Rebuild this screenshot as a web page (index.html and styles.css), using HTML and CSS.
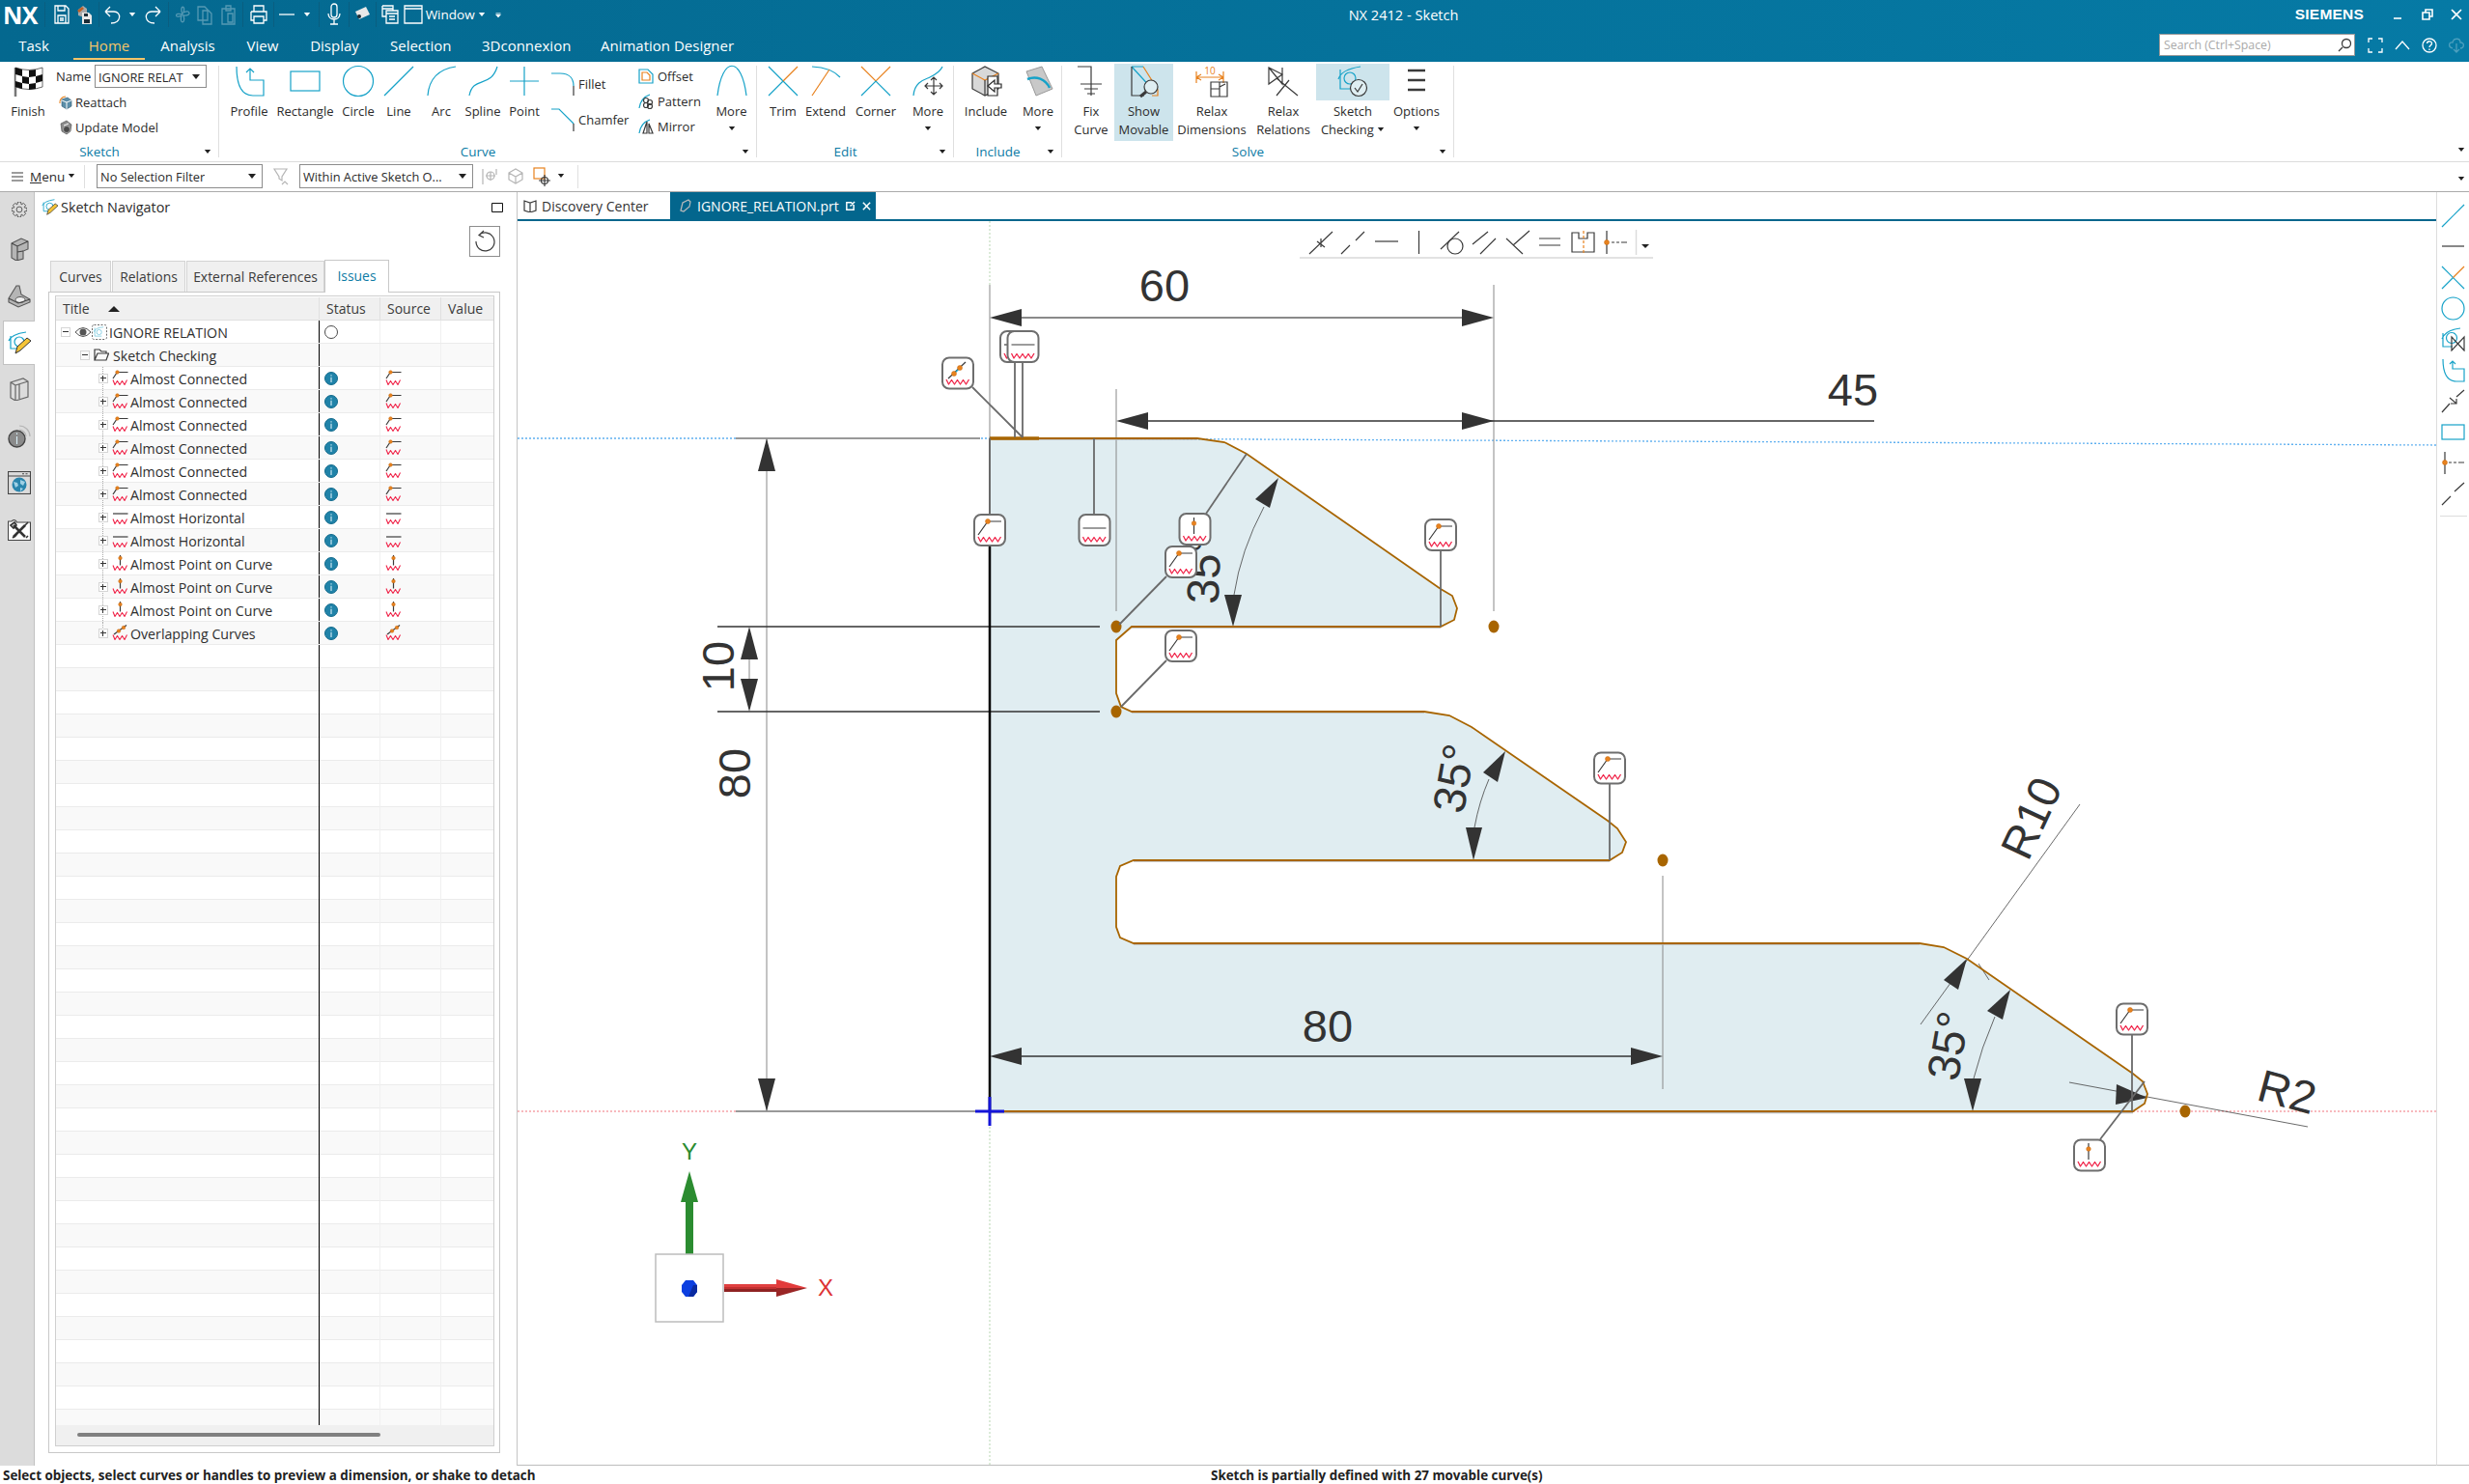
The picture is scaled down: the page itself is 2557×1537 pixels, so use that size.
FILE: index.html
```html
<!DOCTYPE html>
<html lang="en">
<head>
<meta charset="utf-8">
<title>NX 2412 - Sketch</title>
<link rel="stylesheet" href="styles.css">
</head>
<body>
<svg class="defs" width="0" height="0" aria-hidden="true">
  <defs>
    <symbol id="conn" viewBox="4 3 26 27"><path class="dk" d="M16 7H29M15 7L5 21"/><circle cx="15" cy="7" r="2.500" class="or"/><path class="sqw" d="M5 23l2.500 5 3-4.500 3 4.500 3-4.500 3 4.500 3-4.500 3 4.500 3-5"/></symbol>
    <symbol id="horiz" viewBox="4 3 26 27"><path class="dk" d="M5 14H29"/><path class="sqw" d="M5 23l2.500 5 3-4.500 3 4.500 3-4.500 3 4.500 3-4.500 3 4.500 3-5"/></symbol>
    <symbol id="poc" viewBox="4 3 26 27"><path class="dk" d="M16 4V21"/><circle cx="16" cy="10" r="2.300" class="or"/><path class="sqw" d="M5 23l2.500 5 3-4.500 3 4.500 3-4.500 3 4.500 3-4.500 3 4.500 3-5"/></symbol>
    <symbol id="over" viewBox="4 3 26 27"><path class="dk" d="M7 22L25 5"/><path class="cy" d="M13 17L19 11"/><circle cx="13" cy="17" r="2.500" class="or"/><circle cx="19" cy="11" r="2.500" class="or"/><path class="sqw" d="M5 23l2.500 5 3-4.500 3 4.500 3-4.500 3 4.500 3-4.500 3 4.500 3-5"/></symbol>
    <symbol id="rc" viewBox="0 0 17 17"><path class="dk" d="M6 2.500H16.500M5 3L1 9"/><circle cx="5.500" cy="2.500" r="1.800" class="or"/><path class="sqw2" d="M1 10.500l2 5 2.500-4 2.500 4 2.500-4 2.500 4 2.500-5"/></symbol>
    <symbol id="rh" viewBox="0 0 17 17"><path class="dk" d="M1 5H16.500"/><path class="sqw2" d="M1 10.500l2 5 2.500-4 2.500 4 2.500-4 2.500 4 2.500-5"/></symbol>
    <symbol id="rp" viewBox="0 0 17 17"><path class="dk" d="M8.500 0V10.500"/><circle cx="8.500" cy="3" r="1.800" class="or"/><path class="sqw2" d="M1 10.500l2 5 2.500-4 2.500 4 2.500-4 2.500 4 2.500-5"/></symbol>
    <symbol id="ro" viewBox="0 0 17 17"><path class="dk" d="M2 10L15 .5"/><circle cx="7" cy="6.500" r="1.800" class="or"/><circle cx="12" cy="3" r="1.800" class="or"/><path class="sqw2" d="M1 10.500l2 5 2.500-4 2.500 4 2.500-4 2.500 4 2.500-5"/></symbol>
    <symbol id="info" viewBox="0 0 14 14"><circle cx="7" cy="7" r="6.500" class="infoc"/><path class="infol" d="M7 3.200V4.500M7 5.800V11"/></symbol>
    <symbol id="sk" viewBox="0 0 32 32"><path class="bl" d="M3 4V27H22M1 15Q4 4 27 2"/><circle cx="15" cy="16" r="7" class="bl"/></symbol>
  </defs>
</svg>

<div class="app">
  <header class="top">
    <div class="bar1">
      <div class="quick">
        <span class="nx">NX</span><i class="qs"></i>
        <span class="qb w24"><svg viewBox="0 0 20 24"><path class="wh" d="M3 3H14L17 6V21H3ZM6 3V8H13V3M6 21V13H14V21M8 16H12M8 18H12"/></svg></span>
        <span class="qb w24"><svg viewBox="0 0 20 24"><path class="fg" d="M3 7L8 3 12 6V16L3 13Z"/><path class="fo" d="M2 8L7 4 9 6 4 10Z"/><path class="fw" d="M7 10H14L17 13V22H7Z"/><path class="fd" d="M9 11H13V14H9ZM9 17H15V21H9Z"/></svg></span>
        <i class="qs"></i>
        <span class="qb w24"><svg viewBox="0 0 20 24"><path class="wh" d="M3 9H12C20 9 20 21 9 21M3 9L8 4M3 9L8 14"/></svg></span>
        <span class="qb w18"><svg class="ddw" viewBox="0 0 10 6"><path d="M1 0H9L5 5Z"/></svg></span>
        <span class="qb w26"><svg viewBox="0 0 20 24"><path class="wh" d="M17 9H8C0 9 0 21 11 21M17 9L12 4M17 9L12 14"/></svg></span>
        <i class="qs"></i>
        <span class="qb w24 dimq"><svg viewBox="0 0 20 24"><path class="wh" d="M10 12C6 2 14 2 11 10C18 6 20 14 11 13C14 22 6 22 9 13C2 17 1 9 10 12Z"/></svg></span>
        <span class="qb w23 dimq"><svg viewBox="0 0 20 24"><path class="wh" d="M3 4H10L13 7V18H3ZM8 8H14L17 11V22H8V8Z"/></svg></span>
        <span class="qb w26 dimq"><svg viewBox="0 0 20 24"><path class="wh" d="M3 6H16V22H3ZM7 3H12V8H7ZM9 11H14V20H9Z"/></svg></span>
        <i class="qs"></i>
        <span class="qb w27"><svg viewBox="0 0 20 24"><path class="wh" d="M5 9V3H15V9M2 9H18V18H15M5 18H2V9M5 14H15V21H5Z"/></svg></span>
        <i class="qs"></i>
        <span class="qb w22"><svg viewBox="0 0 20 24"><path class="wh" d="M2 12H18"/></svg></span>
        <span class="qb w21"><svg class="ddw" viewBox="0 0 10 6"><path d="M1 0H9L5 5Z"/></svg></span>
        <i class="qs"></i>
        <span class="qb w26"><svg viewBox="0 0 20 24"><path class="wh" d="M7 4A3 3 0 0 1 13 4V12A3 3 0 0 1 7 12ZM4 11C4 19 16 19 16 11M10 17V22M6 22H14"/></svg></span>
        <i class="qs"></i>
        <span class="qb w24"><svg viewBox="0 0 20 24"><path class="fw" d="M3 9L14 4 18 12 7 17Z"/><circle cx="7" cy="14" r="2" class="fd"/></svg></span>
        <i class="qs"></i>
        <span class="qb w25"><svg viewBox="0 0 20 24"><path class="wh" d="M2 3H13V8M2 3V14H6M2 6H13M6 8H18V21H6ZM6 11H18M9 14H15M9 17H15"/></svg></span>
        <span class="qb w23"><svg viewBox="0 0 20 24"><path class="wh" d="M1 3H19V21H1ZM1 6H19"/></svg></span>
        <span class="win">Window</span>
        <span class="qb w17"><svg class="ddw" viewBox="0 0 10 6"><path d="M1 0H9L5 5Z"/></svg></span>
        <span class="qb w17"><svg class="ddw" viewBox="0 0 10 8"><path d="M1 3H9L5 8ZM1 .5H9" class="ddm"/></svg></span>
      </div>
      <div class="apptitle">NX 2412 - Sketch</div>
      <div class="winbtns">
        <span class="siemens">SIEMENS</span>
        <svg class="wb wb-min" viewBox="0 0 12 12"><path class="wh2" d="M3 10H11"/></svg>
        <svg class="wb wb-res" viewBox="0 0 12 12"><path class="wh2" d="M1 4H8V11H1ZM4 4V1H11V8H8"/></svg>
        <svg class="wb" viewBox="0 0 12 12"><path class="wh2" d="M1 1L11 11M11 1L1 11"/></svg>
      </div>
    </div>
    <nav class="bar2">
      <a class="tab t1">Task</a>
      <a class="tab t2 on">Home</a>
      <a class="tab t3">Analysis</a>
      <a class="tab t4">View</a>
      <a class="tab t5">Display</a>
      <a class="tab t6">Selection</a>
      <a class="tab t7">3Dconnexion</a>
      <a class="tab t8">Animation Designer</a>
      <div class="search">
        <span>Search (Ctrl+Space)</span>
        <svg viewBox="0 0 16 16"><path class="mag" d="M6 10L2 14"/><circle cx="10" cy="6" r="4.500" class="mag"/></svg>
      </div>
      <svg class="hb" viewBox="0 0 16 16"><path class="wh" d="M1 5V1H5M11 1H15V5M1 11V15H5M15 11V15H11"/></svg>
      <svg class="hb" viewBox="0 0 16 16"><path class="wh" d="M1 12L8 4 15 12"/></svg>
      <svg class="hb" viewBox="0 0 16 16"><circle cx="8" cy="8" r="7" class="wh"/><path class="wh" d="M5.500 6C6 2.500 11 3.500 10.500 6.300C10 8 8 8 8 10M8 11.500V13"/></svg>
      <svg class="hb dimb" viewBox="0 0 16 16"><path class="wh" d="M4 11C-1 10 0 4 4 5C5 0 12 0 12 5C17 5 16 11 12 11M8 6V15M5 12L8 15 11 12"/></svg>
    </nav>
  </header>

  <section class="ribbon">
    <div class="grp g-sketch">
      <div class="gbody">
        <button class="rb w58">
          <svg class="ri" viewBox="0 0 32 32"><path class="pole" d="M3 2V32"/><path class="flagw" d="M3 2Q17 7 31 2V22Q17 27 3 22Z"/><path class="flagb" d="M3 2L10 4V11L3 9ZM17 5L24 4V11L17 12ZM10 11L17 12V19L10 18ZM24 11L31 9V16L24 18ZM3 16L10 18V24L3 22ZM17 19L24 18V24L17 25Z"/></svg>
          <span>Finish</span>
        </button>
        <div class="skcol">
          <div class="namerow"><span class="nm">Name</span><div class="combo c-name"><span>IGNORE RELAT</span><svg class="dd" viewBox="0 0 10 6"><path d="M1 0H9L5 5Z"/></svg></div></div>
          <div class="sm s-re"><svg viewBox="0 0 16 16"><path class="c-o" d="M2 9A6 6 0 0 1 8 2"/><path class="f-b" d="M4 5L10 3 14 6V12L9 15 4 12Z"/><path class="c-w" d="M4 6L9 8 14 6M9 8V15"/></svg>Reattach</div>
          <div class="sm s-up"><svg viewBox="0 0 16 16"><path class="f-g" d="M3 4L9 1 14 5 13 12 9 15 4 12Z"/><circle cx="9" cy="10" r="3.500" class="f-d"/><path class="c-w" d="M6 6L11 4"/></svg>Update Model</div>
        </div>
      </div>
      <div class="gfoot"><b>Sketch</b><svg class="dd" viewBox="0 0 10 6"><path d="M1 0H9L5 5Z"/></svg></div>
    </div>
    <i class="rdiv"></i>
    <div class="grp g-curve">
      <div class="gbody pl7">
        <button class="rb w48"><svg class="ri" viewBox="0 0 32 32"><path class="bl" d="M3 1Q3 31 20 31H31V15H17V3M13 7L17 3 21 7"/></svg><span>Profile</span></button>
        <button class="rb w68"><svg class="ri" viewBox="0 0 32 32"><rect x="1" y="6" width="30" height="20" class="bl"/></svg><span>Rectangle</span></button>
        <button class="rb w42"><svg class="ri" viewBox="0 0 32 32"><ellipse cx="16" cy="16" rx="15.500" ry="15.500" class="bl"/></svg><span>Circle</span></button>
        <button class="rb w42"><svg class="ri" viewBox="0 0 32 32"><path class="bl" d="M1 31L31 1"/></svg><span>Line</span></button>
        <button class="rb w46"><svg class="ri" viewBox="0 0 32 32"><path class="bl" d="M2 31Q4 5 31 1"/></svg><span>Arc</span></button>
        <button class="rb w40"><svg class="ri" viewBox="0 0 32 32"><path class="bl" d="M2 31C6 10 24 24 31 1"/></svg><span>Spline</span></button>
        <button class="rb w46"><svg class="ri" viewBox="0 0 32 32"><path class="bl" d="M16 1V31M1 16H31"/></svg><span>Point</span></button>
        <div class="cf">
          <div class="cfr"><svg viewBox="0 0 24 24"><path class="bl" d="M0 1H9C20 1 23 8 23 14"/><path class="dk" d="M23 14V24"/></svg>Fillet</div>
          <div class="cfr cfr2"><svg viewBox="0 0 24 24"><path class="bl" d="M0 1H8L23 16"/><path class="dk" d="M23 16V24"/></svg>Chamfer</div>
        </div>
        <div class="ops">
          <div class="sm2"><svg viewBox="0 0 16 16"><path class="bl" d="M1 1H10L15 6V15H1Z"/><path class="c-o" d="M4 4H9L12 7V12H4Z"/></svg>Offset</div>
          <div class="sm2"><svg viewBox="0 0 16 16"><path class="bl" d="M1 15C2 8 6 3 12 1"/><circle cx="8" cy="7" r="2.500" class="dk"/><circle cx="12" cy="9" r="2.500" class="dk"/><circle cx="8" cy="12" r="2.500" class="dk"/><circle cx="12" cy="13" r="2.500" class="dk"/></svg>Pattern</div>
          <div class="sm2"><svg viewBox="0 0 16 16"><path class="bl" d="M1 15C2 8 6 3 12 1"/><path class="dk" d="M9 3V15H5ZM11 5V15H15Z"/></svg>Mirror</div>
        </div>
        <button class="rb w45"><svg class="ri" viewBox="0 0 32 32"><path class="bl" d="M1 31C6 -10 26 -10 31 31"/></svg><span>More</span><svg class="dd mdd" viewBox="0 0 10 6"><path d="M1 0H9L5 5Z"/></svg></button>
      </div>
      <div class="gfoot"><b>Curve</b><svg class="dd" viewBox="0 0 10 6"><path d="M1 0H9L5 5Z"/></svg></div>
    </div>
    <i class="rdiv"></i>
    <div class="grp g-edit">
      <div class="gbody pl6">
        <button class="rb w42"><svg class="ri" viewBox="0 0 32 32"><path class="bl" d="M1 1L31 31M1 31L16 16"/><path class="c-o" d="M16 16L31 1"/></svg><span>Trim</span></button>
        <button class="rb w46"><svg class="ri" viewBox="0 0 32 32"><path class="bl" d="M2 1Q22 2 31 12"/><path class="c-o" d="M2 31L20 4"/></svg><span>Extend</span></button>
        <button class="rb w58"><svg class="ri" viewBox="0 0 32 32"><path class="c-o" d="M1 1L16 16 31 1"/><path class="bl" d="M1 31L16 16 31 31"/></svg><span>Corner</span></button>
        <button class="rb w50"><svg class="ri" viewBox="0 0 32 32"><path class="bl" d="M1 31C2 16 14 14 18 12C24 9 29 6 31 1"/><path class="dk" d="M22 12V30M13 21H31M19 15L22 12 25 15M19 27L22 30 25 27M16 18L13 21 16 24M28 18L31 21 28 24"/></svg><span>More</span><svg class="dd mdd" viewBox="0 0 10 6"><path d="M1 0H9L5 5Z"/></svg></button>
      </div>
      <div class="gfoot"><b>Edit</b><svg class="dd" viewBox="0 0 10 6"><path d="M1 0H9L5 5Z"/></svg></div>
    </div>
    <i class="rdiv"></i>
    <div class="grp g-inc">
      <div class="gbody">
        <button class="rb w66"><svg class="ri" viewBox="0 0 32 32"><path class="f-g2" d="M2 8L15 1 29 8V24L15 31 2 24Z"/><path class="c-o" d="M2 8L15 15 29 8"/><path class="dk" d="M15 15V31"/><path class="f-wk" d="M18 11H28V31H18Z"/><path class="f-wk" d="M32 19H25V15L18 21 25 27V23H32Z"/></svg><span>Include</span></button>
        <button class="rb w42"><svg class="ri" viewBox="0 0 32 32"><path class="f-g3" d="M4 6L20 1 31 24 14 31Z"/><path class="bl2" d="M5 14C14 10 24 14 28 23"/></svg><span>More</span><svg class="dd mdd" viewBox="0 0 10 6"><path d="M1 0H9L5 5Z"/></svg></button>
      </div>
      <div class="gfoot"><b>Include</b><svg class="dd" viewBox="0 0 10 6"><path d="M1 0H9L5 5Z"/></svg></div>
    </div>
    <i class="rdiv"></i>
    <div class="grp g-solve">
      <div class="gbody pl6">
        <button class="rb w48"><svg class="ri" viewBox="0 0 32 32"><path class="dk" d="M2 1H16V19M5 19H27M9 24H23M12 29H20M16 19V31"/></svg><span>Fix<br>Curve</span></button>
        <button class="rb w61 hl"><svg class="ri" viewBox="0 0 32 32"><path class="c-o" d="M15 1L30 25V31H24"/><path class="bl" d="M3 1H15M3 1L25 25"/><path class="dk" d="M3 1V31H16"/><circle cx="23" cy="22" r="7" class="c-k"/><path class="dk2" d="M18 27L12 32"/></svg><span>Show<br>Movable</span></button>
        <button class="rb w80"><svg class="ri" viewBox="0 0 32 32"><path class="c-o" d="M0 6V18M28 6V18M0 12H28M0 12L5 9M0 12L5 15M28 12L23 9M28 12L23 15"/><text x="14" y="9" class="ten">10</text><path class="dk" d="M15 17H32V32H15ZM15 24H24V32M24 24V17M24 22L30 19"/></svg><span>Relax<br>Dimensions</span></button>
        <button class="rb w68"><svg class="ri" viewBox="0 0 32 32"><path class="dk" d="M1 2V19L15 9ZM1 2L15 19V2M9 13L31 31M9 31L22 15"/></svg><span>Relax<br>Relations</span></button>
        <button class="rb w76"><span class="hlbox"><svg class="ri" viewBox="0 0 32 32"><path class="bl" d="M3 4V24H14M1 14Q4 4 24 1"/><circle cx="13" cy="13" r="6" class="bl"/><circle cx="22" cy="23" r="8.500" class="c-k"/><path class="dk" d="M18 23L21 27 26 19"/></svg></span><span>Sketch<br>Checking <svg class="dd ddin" viewBox="0 0 10 6"><path d="M1 0H9L5 5Z"/></svg></span></button>
        <button class="rb w56"><svg class="ri" viewBox="0 0 32 32"><path class="dk3" d="M7 5H25M7 15H25M7 25H25"/></svg><span>Options</span><svg class="dd mdd" viewBox="0 0 10 6"><path d="M1 0H9L5 5Z"/></svg></button>
      </div>
      <div class="gfoot"><b>Solve</b><svg class="dd" viewBox="0 0 10 6"><path d="M1 0H9L5 5Z"/></svg></div>
    </div>
    <i class="rdiv"></i>
    <svg class="dd rcol" viewBox="0 0 10 6"><path d="M1 0H9L5 5Z"/></svg>
  </section>

  <section class="tools">
    <svg class="mn" viewBox="0 0 12 12"><path class="dk" d="M0 2H12M0 6H12M0 10H12"/></svg>
    <span class="menu"><u>M</u>enu</span>
    <svg class="dd m1" viewBox="0 0 10 6"><path d="M1 0H9L5 5Z"/></svg>
    <i class="tdiv"></i>
    <div class="combo c-f1"><span>No Selection Filter</span><svg class="dd" viewBox="0 0 10 6"><path d="M1 0H9L5 5Z"/></svg></div>
    <svg class="ti ti1" viewBox="0 0 20 20"><path class="gr" d="M3 2H16L11 10V14L8 12V10ZM11 18L14 15 17 18"/></svg>
    <div class="combo c-f2"><span>Within Active Sketch O...</span><svg class="dd" viewBox="0 0 10 6"><path d="M1 0H9L5 5Z"/></svg></div>
    <svg class="ti ti2" viewBox="0 0 20 20"><path class="gr" d="M3 2V18M17 2V8M6 9H16M11 5V14"/><circle cx="11" cy="9" r="4" class="gr"/></svg>
    <svg class="ti ti3" viewBox="0 0 20 20"><path class="gr" d="M3 6L10 2 17 6V13L10 17 3 13ZM3 6L10 10 17 6M10 10V17"/></svg>
    <svg class="ti ti4" viewBox="0 0 20 20"><rect x="2" y="1" width="11" height="11" class="c-o"/><path class="dk" d="M13 8V20M7 14H19"/><circle cx="13" cy="14" r="3.500" class="dk"/></svg>
    <svg class="dd m2" viewBox="0 0 10 6"><path d="M1 0H9L5 5Z"/></svg>
    <i class="tdiv d2"></i>
    <svg class="dd rcol" viewBox="0 0 10 6"><path d="M1 0H9L5 5Z"/></svg>
  </section>

  <main class="work">
    <aside class="rail">
      <div class="rit h35"><svg class="gear" viewBox="3 3 22 22"><circle cx="14" cy="14" r="4" class="rg"/><path class="rg" d="M12 3H16L17 7 20 5 23 8 21 11 25 12V16L21 17 23 20 20 23 17 21 16 25H12L11 21 8 23 5 20 7 17 3 16V12L7 11 5 8 8 5 11 7Z"/></svg></div>
      <div class="rit h48"><svg viewBox="0 0 24 24"><path class="rf" d="M4 6L14 1 21 4V12L16 14V22L9 24 4 21Z"/><path class="rl" d="M4 6L10 9 21 4M10 9V24M10 15L16 14"/></svg></div>
      <div class="rit h50"><svg viewBox="0 0 24 24"><path class="rf" d="M1 14L9 1H12L14 10 23 15V18L11 23 1 18Z"/><ellipse cx="13" cy="15.500" rx="5" ry="3" class="rw"/><path class="rl" d="M1 14L11 19 23 15"/></svg></div>
      <div class="rit h46 act"><svg viewBox="0 0 24 24"><path class="bl" d="M3 5V18H13M1 10Q4 3 19 1"/><circle cx="12" cy="11" r="5" class="bl"/><path class="pen" d="M8 23L10 16 20 7 24 10 13 20Z"/></svg></div>
      <div class="rit h50"><svg viewBox="0 0 24 24"><path class="rl2" d="M3 5L16 1 21 4V20L8 24 3 21ZM8 8L21 4M8 8V24M3 5L8 8M12 7V22"/></svg></div>
      <div class="rit h48"><svg viewBox="0 0 24 24"><circle cx="9.500" cy="14.500" r="8.500" class="ri-i"/><path class="infol" d="M9.500 12V20M9.500 8.500V10"/><path class="rarc" d="M12 1C18 1 23 6 23 12M12 5C15 5 19 8 19 12"/></svg></div>
      <div class="rit h48"><svg viewBox="0 0 24 24"><rect x=".5" y=".5" width="23" height="23" class="rl"/><path class="rl" d="M.5 5H23.500M15 2.800H17M18.500 2.800H20.500"/><circle cx="12" cy="14" r="7.500" class="glob"/><path class="globl" d="M6 11L10 12 11 15 8 17ZM13 9L18 11 16 15 13 13ZM13 17L16 18 13 21Z"/></svg></div>
      <div class="rit h48"><svg viewBox="0 0 24 24"><path class="rw2" d="M.5 4H4A3 3 0 0 1 9 4V5H23.500V23.500H.5Z"/><path class="tool" d="M6 8L18 20M18 8L6 20"/><path class="tool2" d="M3 8L7 5 9 8 6 11ZM16 10L21 5M5 21L9 18M19 21L21 19"/></svg></div>
    </aside>

    <aside class="nav">
      <div class="navhead">
        <svg class="nvi" viewBox="0 0 24 24"><path class="bl" d="M3 5V18H13M1 10Q4 3 19 1"/><circle cx="12" cy="11" r="5" class="bl"/><path class="pen" d="M8 23L10 16 20 7 24 10 13 20Z"/></svg>
        <span class="navt">Sketch Navigator</span>
        <svg class="maxi" viewBox="0 0 12 11"><path d="M.5 1.500H11.500V10.500H.5Z" class="mx"/></svg>
      </div>
      <button class="reset"><svg viewBox="0 0 24 24"><path class="dk" d="M6 5.500A9.500 9.500 0 1 1 3 12M11 1L6 5.500 11 8"/></svg></button>
      <div class="ntabs">
        <span class="nt nt1">Curves</span>
        <span class="nt nt2">Relations</span>
        <span class="nt nt3">External References</span>
        <span class="nt nt4">Issues</span>
      </div>
      <div class="box">
        <div class="inner">
          <div class="hdr">
            <div class="hc">Title<svg class="sort" viewBox="0 0 12 6"><path d="M6 0L12 6H0Z"/></svg></div>
            <div class="hc">Status</div>
            <div class="hc">Source</div>
            <div class="hc">Value</div>
          </div>
          <div class="row">
            <div class="c1 lv0"><i class="exp"></i><svg class="eye" viewBox="0 0 16 12"><path class="eyeo" d="M0 6Q8 -3 16 6Q8 15 0 6Z"/><circle cx="8" cy="6" r="3.500" class="eyep"/></svg><svg class="rootk" viewBox="0 0 16 16"><rect x=".5" y=".5" width="15" height="15" rx="2" class="dash"/><use href="#sk" x="2" y="2" width="12" height="12"/></svg><span class="rt">IGNORE RELATION</span></div>
            <div class="cs"><svg class="st" viewBox="0 0 14 14"><circle cx="7" cy="7" r="6.500" class="emp"/></svg></div><div class="cx"></div><div class="cv"></div>
          </div>
          <div class="row alt">
            <div class="c1 lv1"><i class="exp"></i><svg class="fold" viewBox="0 0 16 13"><path class="dk" d="M1 12V1H6L8 3H13V5H4L1 12H13L15.500 5H13"/></svg><span class="st2">Sketch Checking</span></div>
            <div class="cs"></div><div class="cx"></div><div class="cv"></div>
          </div>
          <div class="row ch"><div class="c1 lv2"><i class="exp pl"></i><svg class="ik"><use href="#rc"/></svg><span>Almost Connected</span></div><div class="cs"><svg class="st"><use href="#info"/></svg></div><div class="cx"><svg class="ik"><use href="#rc"/></svg></div><div class="cv"></div></div>
          <div class="row alt ch"><div class="c1 lv2"><i class="exp pl"></i><svg class="ik"><use href="#rc"/></svg><span>Almost Connected</span></div><div class="cs"><svg class="st"><use href="#info"/></svg></div><div class="cx"><svg class="ik"><use href="#rc"/></svg></div><div class="cv"></div></div>
          <div class="row ch"><div class="c1 lv2"><i class="exp pl"></i><svg class="ik"><use href="#rc"/></svg><span>Almost Connected</span></div><div class="cs"><svg class="st"><use href="#info"/></svg></div><div class="cx"><svg class="ik"><use href="#rc"/></svg></div><div class="cv"></div></div>
          <div class="row alt ch"><div class="c1 lv2"><i class="exp pl"></i><svg class="ik"><use href="#rc"/></svg><span>Almost Connected</span></div><div class="cs"><svg class="st"><use href="#info"/></svg></div><div class="cx"><svg class="ik"><use href="#rc"/></svg></div><div class="cv"></div></div>
          <div class="row ch"><div class="c1 lv2"><i class="exp pl"></i><svg class="ik"><use href="#rc"/></svg><span>Almost Connected</span></div><div class="cs"><svg class="st"><use href="#info"/></svg></div><div class="cx"><svg class="ik"><use href="#rc"/></svg></div><div class="cv"></div></div>
          <div class="row alt ch"><div class="c1 lv2"><i class="exp pl"></i><svg class="ik"><use href="#rc"/></svg><span>Almost Connected</span></div><div class="cs"><svg class="st"><use href="#info"/></svg></div><div class="cx"><svg class="ik"><use href="#rc"/></svg></div><div class="cv"></div></div>
          <div class="row ch"><div class="c1 lv2"><i class="exp pl"></i><svg class="ik"><use href="#rh"/></svg><span>Almost Horizontal</span></div><div class="cs"><svg class="st"><use href="#info"/></svg></div><div class="cx"><svg class="ik"><use href="#rh"/></svg></div><div class="cv"></div></div>
          <div class="row alt ch"><div class="c1 lv2"><i class="exp pl"></i><svg class="ik"><use href="#rh"/></svg><span>Almost Horizontal</span></div><div class="cs"><svg class="st"><use href="#info"/></svg></div><div class="cx"><svg class="ik"><use href="#rh"/></svg></div><div class="cv"></div></div>
          <div class="row ch"><div class="c1 lv2"><i class="exp pl"></i><svg class="ik"><use href="#rp"/></svg><span>Almost Point on Curve</span></div><div class="cs"><svg class="st"><use href="#info"/></svg></div><div class="cx"><svg class="ik"><use href="#rp"/></svg></div><div class="cv"></div></div>
          <div class="row alt ch"><div class="c1 lv2"><i class="exp pl"></i><svg class="ik"><use href="#rp"/></svg><span>Almost Point on Curve</span></div><div class="cs"><svg class="st"><use href="#info"/></svg></div><div class="cx"><svg class="ik"><use href="#rp"/></svg></div><div class="cv"></div></div>
          <div class="row ch"><div class="c1 lv2"><i class="exp pl"></i><svg class="ik"><use href="#rp"/></svg><span>Almost Point on Curve</span></div><div class="cs"><svg class="st"><use href="#info"/></svg></div><div class="cx"><svg class="ik"><use href="#rp"/></svg></div><div class="cv"></div></div>
          <div class="row alt ch last"><div class="c1 lv2"><i class="exp pl"></i><svg class="ik"><use href="#ro"/></svg><span>Overlapping Curves</span></div><div class="cs"><svg class="st"><use href="#info"/></svg></div><div class="cx"><svg class="ik"><use href="#ro"/></svg></div><div class="cv"></div></div>
          <div class="filler"></div>
          <div class="hscroll"><i></i></div>
        </div>
      </div>
    </aside>

    <section class="doc">
      <div class="doctabs">
        <span class="dt dt1"><svg viewBox="0 0 14 14"><path class="dk" d="M1 2L7 4 13 2V12L7 14 1 12ZM7 4V14"/></svg>Discovery Center</span>
        <span class="dt dt2"><svg viewBox="0 0 14 14"><path class="gray" d="M2 12L4 4 10 1 12 3 11 8 5 13Z"/></svg>IGNORE_RELATION.prt<svg class="dtx" viewBox="0 0 12 12"><path class="wh2" d="M2 2H7L10 5V10H2ZM6 6L11 1"/></svg><svg class="dtx" viewBox="0 0 12 12"><path class="wh2" d="M2 2L10 10M10 2L2 10"/></svg></span>
      </div>
      <div class="canvas">
        <svg class="sketch" viewBox="536 229 1987 1288">
          <path class="shape" d="M1025 454H1240L1268 458 1291 470 1492 610 1504 617 1509 630 1506 642 1492 649H1172L1156 663V718L1161 732 1172 737H1475L1501 741 1524 753 1665 850 1675 858 1684 872 1680 883 1667 891H1174L1160 897 1156 908V960L1160 971 1174 977H1988L2013 981 2037 993 2209 1112 2219 1120 2224 1133 2221 1143 2209 1151H1025Z"/>
          <path class="d-green" d="M1025 229V295M1025 1151V1517"/>
          <path class="d-blue" d="M536 454H1025M1025 454L1300 455 2523 461"/>
          <path class="d-red" d="M536 1151H762M2209 1151H2523"/>

          <g class="ext">
            <path d="M1025 295V454"/>
            <path d="M1547 295V633"/>
            <path d="M1156 403V633"/>
            <path d="M1722 907V1128"/>
            <path d="M794 454V1151"/>
            <path d="M776 683V703"/>
          </g>
          <g class="ext2">
            <path d="M762 454H1015"/>
            <path d="M762 1151H1025"/>
          </g>
          <path class="dimg" d="M1058 329H1514"/>
          <g class="dimk">
            <path d="M1189 436H1941"/>
            <path d="M743 649H1139M743 737H1139"/>
            <path d="M1058 1094H1689"/>
          </g>
          <g class="thin">
            <path d="M1309 525Q1285 570 1278 616"/>
            <path d="M1542 807Q1532 830 1527 857"/>
            <path d="M2066 1053Q2052 1085 2044 1117"/>
            <path d="M2154 833L1989 1061"/>
            <path d="M2049 998L2060 1015"/>
            <path d="M2143 1121L2390 1167"/>
          </g>
          <g class="arrow">
            <polygon points="1025,329 1058,320 1058,338"/>
            <polygon points="1547,329 1514,320 1514,338"/>
            <polygon points="1156,436 1189,427 1189,445"/>
            <polygon points="1547,436 1514,427 1514,445"/>
            <polygon points="794,454 785,488 803,488"/>
            <polygon points="794,1151 785,1117 803,1117"/>
            <polygon points="776,649 767,683 785,683"/>
            <polygon points="776,737 767,703 785,703"/>
            <polygon points="1025,1094 1058,1085 1058,1103"/>
            <polygon points="1722,1094 1689,1085 1689,1103"/>
            <polygon points="1324,495 1300,517 1315,526"/>
            <polygon points="1277,649 1268,616 1286,616"/>
            <polygon points="1559,778 1536,800 1551,810"/>
            <polygon points="1526,891 1518,857 1535,857"/>
            <polygon points="2082,1025 2058,1047 2074,1056"/>
            <polygon points="2043,1151 2034,1117 2052,1117"/>
            <polygon points="2037,993 2013,1015 2028,1025"/>
            <polygon points="2224,1137 2192,1123 2191,1144"/>
          </g>

          <text class="dt-t" x="1206" y="312">60</text>
          <text class="dt-t" x="1919" y="420">45</text>
          <text class="dt-t" x="1375" y="1079">80</text>
          <text class="dt-t" transform="translate(760 801) rotate(-90)" y="17">80</text>
          <text class="dt-t" transform="translate(743 690) rotate(-90)" y="17">10</text>
          <text class="dt-t" transform="translate(1246 590) rotate(-88)" y="17">35°</text>
          <text class="dt-t" transform="translate(1505 806) rotate(-80)" y="17">35°</text>
          <text class="dt-t" transform="translate(2017 1083) rotate(-80)" y="17">35°</text>
          <text class="dt-t" transform="translate(2103 847) rotate(-65)" y="17">R10</text>
          <text class="dt-t" transform="translate(2369 1130) rotate(15)" y="17">R2</text>

          <path class="under" d="M1025 455H1240M1172 650H1492M1172 738H1475M1174 892H1667M1174 978H1988M1025 1152.500H2209"/>
          <path class="outline" d="M1025 454H1240L1268 458 1291 470 1492 610 1504 617 1509 630 1506 642 1492 649H1172L1156 663V718L1161 732 1172 737H1475L1501 741 1524 753 1665 850 1675 858 1684 872 1680 883 1667 891H1174L1160 897 1156 908V960L1160 971 1174 977H1988L2013 981 2037 993 2209 1112 2219 1120 2224 1133 2221 1143 2209 1151H1025"/>
          <path class="thick" d="M1025 454H1076"/>
          <path class="axis" d="M1025 565V1151"/>
          <path class="axisg" d="M1025 454V533"/>
          <path class="origin" d="M1010 1151H1040M1025 1136V1166"/>

          <g class="pts">
            <ellipse cx="1156" cy="649" rx="5.500" ry="6.500"/>
            <ellipse cx="1156" cy="737" rx="5.500" ry="6.500"/>
            <ellipse cx="1547" cy="649" rx="5.500" ry="6.500"/>
            <ellipse cx="1722" cy="891" rx="5.500" ry="6.500"/>
            <ellipse cx="2263" cy="1151" rx="5.500" ry="6.500"/>
          </g>

          <g class="lead">
            <path d="M1007 401L1059 453"/>
            <path d="M1051 375V453M1059 375V453"/>
            <path d="M1133 454V533"/>
            <path d="M1249 532L1291 470"/>
            <path d="M1208 597L1159 647"/>
            <path d="M1208 684L1161 732"/>
            <path d="M1492 570V649"/>
            <path d="M1667 812V891"/>
            <path d="M2208 1072V1151"/>
            <path d="M2175 1180L2221 1120"/>
          </g>

          <g class="call"><rect x="1036" y="343" width="32" height="32" rx="7"/><use href="#horiz" x="1039" y="346" width="26" height="27"/></g>
          <g class="call"><rect x="1043.500" y="343" width="32" height="32" rx="7"/><use href="#horiz" x="1046.500" y="346" width="26" height="27"/></g>
          <g class="call"><rect x="976" y="370.500" width="32" height="32" rx="7"/><use href="#over" x="979" y="373" width="26" height="27"/></g>
          <g class="call"><rect x="1009" y="533" width="32" height="32" rx="7"/><use href="#conn" x="1012" y="536" width="26" height="27"/></g>
          <g class="call"><rect x="1117.500" y="533" width="32" height="32" rx="7"/><use href="#horiz" x="1120.500" y="536" width="26" height="27"/></g>
          <g class="call"><rect x="1221.500" y="532" width="32" height="32" rx="7"/><use href="#poc" x="1224.500" y="535" width="26" height="27"/></g>
          <g class="call"><rect x="1207" y="566" width="32" height="32" rx="7"/><use href="#conn" x="1210" y="569" width="26" height="27"/></g>
          <g class="call"><rect x="1207" y="653" width="32" height="32" rx="7"/><use href="#conn" x="1210" y="656" width="26" height="27"/></g>
          <g class="call"><rect x="1476" y="538" width="32" height="32" rx="7"/><use href="#conn" x="1479" y="541" width="26" height="27"/></g>
          <g class="call"><rect x="1651" y="779.500" width="32" height="32" rx="7"/><use href="#conn" x="1654" y="782" width="26" height="27"/></g>
          <g class="call"><rect x="2192" y="1039.500" width="32" height="32" rx="7"/><use href="#conn" x="2195" y="1042" width="26" height="27"/></g>
          <g class="call"><rect x="2148" y="1180.500" width="32" height="32" rx="7"/><use href="#poc" x="2151" y="1183" width="26" height="27"/></g>

          <path class="ygreen" d="M714 1299V1245"/>
          <polygon class="yhead" points="714,1213 705,1245 723,1245"/>
          <rect class="tbox" x="679" y="1299" width="70" height="70"/>
          <polygon class="oct" points="710,1326 718,1326 722,1331 722,1338 718,1343 710,1343 706,1338 706,1331"/>
          <polygon class="octd" points="718,1331 722,1331 722,1338 718,1343 713,1343"/>
          <rect class="xsh1" x="750" y="1330" width="55" height="3"/>
          <rect class="xsh2" x="750" y="1333" width="55" height="2"/>
          <rect class="xsh3" x="750" y="1335" width="55" height="3"/>
          <polygon class="xh1" points="804,1325 836,1334 804,1334"/>
          <polygon class="xh2" points="804,1334 836,1334 804,1343"/>
          <text class="tl-y" x="714" y="1201">Y</text>
          <text class="tl-x" x="855" y="1342">X</text>
        </svg>
        <div class="ctool">
          <svg viewBox="1346 236 366 31">
            <path class="dk" d="M1356 263L1380 240M1364 250L1372 256M1368 247V256"/>
            <path class="dk" d="M1389 263L1398 254M1404 249L1413 240"/>
            <path class="dk" d="M1424 250H1448"/>
            <path class="dk" d="M1469.500 239V263"/>
            <path class="dk" d="M1492 258L1511 240"/><circle cx="1507" cy="255" r="8" class="dk"/>
            <path class="dk" d="M1525 253L1541 240M1533 263L1549 247"/>
            <path class="dk" d="M1560 247L1577 263M1567 254L1584 239"/>
            <path class="dk" d="M1594 247H1616M1594 254H1616"/>
            <path class="dk" d="M1628 241H1635V247H1644V241H1651V261H1628Z"/>
            <path class="dso" d="M1640 239V264"/>
            <path class="dk" d="M1664 239V263M1669 251H1672M1674 251H1677M1679 251H1685"/>
            <circle cx="1664" cy="251" r="2.500" class="or"/>
            <path class="ctdiv" d="M1694.500 238V264"/>
            <path class="ctdd" d="M1700 253H1708L1704 257Z"/>
          </svg>
        </div>
      </div>
    </section>

    <aside class="rtool">
      <svg viewBox="0 0 25 25"><path class="bl" d="M1 24L24 1"/></svg>
      <svg viewBox="0 0 25 25"><path class="dk" d="M1 12H24"/></svg>
      <svg viewBox="0 0 25 25"><path class="bl" d="M1 1L24 24M1 24L12.500 12.500"/><path class="c-o" d="M12.500 12.500L24 1"/></svg>
      <svg viewBox="0 0 25 25"><circle cx="12.500" cy="12.500" r="11.500" class="bl"/></svg>
      <svg viewBox="0 0 25 25"><path class="bl" d="M2 6V20H12M1 12Q4 3 20 1"/><circle cx="11" cy="11" r="5.500" class="bl"/><path class="dk" d="M11 10V24L24 10V24ZM11 10L24 24"/></svg>
      <svg viewBox="0 0 25 25"><path class="bl" d="M2 1Q2 24 16 24H24V11H12V3M9 6L12 3 15 6"/></svg>
      <svg viewBox="0 0 25 25"><path class="dk" d="M1 24L9 15M16 8L24 1M9 9L16 15M16 10V15H10"/></svg>
      <svg viewBox="0 0 25 25"><rect x="1" y="5" width="23" height="15" class="bl"/></svg>
      <svg viewBox="0 0 25 25"><path class="dk" d="M4 1V24M8 12H11M13 12H16M18 12H24"/><circle cx="4" cy="12" r="2.500" class="or"/></svg>
      <svg viewBox="0 0 25 25"><path class="dk" d="M1 24L10 15M14 10L24 1"/></svg>
      <i class="rtdiv"></i>
    </aside>
  </main>

  <footer class="status">
    <span class="s1">Select objects, select curves or handles to preview a dimension, or shake to detach</span>
    <span class="s2">Sketch is partially defined with 27 movable curve(s)</span>
  </footer>
</div>
</body>
</html>
```

FILE: styles.css
```css
* { box-sizing: border-box; }
html, body { margin: 0; height: 100%; overflow: hidden; background: #fff; }
body { font-family: "Open Sans", "Noto Sans", "Liberation Sans", sans-serif; font-size: 13px; color: #2b2b2b; }
.defs { position: absolute; }
.app { width: 2557px; height: 1537px; display: flex; flex-direction: column; }
i { display: block; font-style: normal; }
button { font: inherit; color: inherit; background: none; border: 0; padding: 0; }

/* shared stroke styles */
svg path, svg circle, svg rect, svg ellipse { fill: none; }
.dk { stroke: #3a3a3a; stroke-width: 1.200; }
.dk2 { stroke: #3a3a3a; stroke-width: 3; }
.dk3 { stroke: #3a3a3a; stroke-width: 2.500; }
.bl { stroke: #16a2c8; stroke-width: 1.200; }
.bl2 { stroke: #16a2c8; stroke-width: 2.500; }
.c-o { stroke: #e8821e; stroke-width: 1.200; }
.c-k { stroke: #3a3a3a; stroke-width: 1.200; fill: #dfeef2 !important; }
.c-w { stroke: #fff; stroke-width: 1; }
svg .or { fill: #e8821e; stroke: #c9690f; stroke-width: .5; }
.cy { stroke: #16a2c8; stroke-width: 1.500; }
.sqw { stroke: #f0254a; stroke-width: 1.300; stroke-linejoin: round; }
.sqw2 { stroke: #f0254a; stroke-width: 1.100; stroke-linejoin: round; }
.wh { stroke: #fff; stroke-width: 1.300; }
.wh2 { stroke: #fff; stroke-width: 1.600; }
svg .fw { fill: #e8e8e8; }
svg .fg { fill: #a9a9a9; }
svg .fo { fill: #c0622a; }
svg .fd { fill: #1c2c36; }
svg .f-b { fill: #5b8ea8; stroke: #2f5870; stroke-width: .6; }
svg .f-g { fill: #8c8c8c; stroke: #444; stroke-width: .6; }
svg .f-d { fill: #4a4a4a; stroke: #ccc; stroke-width: .6; }
svg .f-g2 { fill: #d8d8d8; stroke: #3a3a3a; stroke-width: 1.200; }
svg .f-g3 { fill: #c8c8c8; stroke: #999; stroke-width: 1; }
svg .f-wk { fill: #fff; stroke: #2b2b2b; stroke-width: 1.200; }
svg .pole { stroke: #777; stroke-width: 2.500; }
svg .flagw { fill: #fff; stroke: #444; stroke-width: .8; }
svg .flagb { fill: #111; }
svg .pen { fill: #f5c437; stroke: #333; stroke-width: 1; }
svg .infoc { fill: #2083a9; stroke: #136a8c; stroke-width: 1; }
.infol { stroke: #d9eff7; stroke-width: 1.100; }
.emp { stroke: #4a4a4a; stroke-width: 1; }
.gr { stroke: #b5b5b5; stroke-width: 1.200; }
.gray { stroke: #bbb; stroke-width: 1.200; }
.mag { stroke: #3a3a3a; stroke-width: 1.300; }

/* title bar */
.top { height: 64px; background: linear-gradient(90deg, #04688f 0%, #05729b 55%, #067aa5 100%); color: #fff; flex: none; }
.bar1 { height: 30px; display: flex; align-items: center; }
.quick { display: flex; align-items: center; height: 30px; }
.nx { font: 700 25px "Open Sans", sans-serif; width: 46px; padding-left: 3px; letter-spacing: -.5px; }
.qs { width: 1px; height: 26px; background: #0a5e80; margin: 0 1.700px; }
.quick > .nx + .qs { margin-left: 0; margin-right: 5px; }
.qb { display: flex; align-items: center; justify-content: center; height: 24px; }
.qb svg { width: 20px; height: 24px; }
.qb .ddw { width: 8px; height: 5px; }
.ddw path { fill: #fff; }
.ddw .ddm { stroke: #fff; }
.dimq { opacity: .32; }
.w17 { width: 17px; } .w18 { width: 18px; } .w21 { width: 21px; } .w22 { width: 22px; }
.w23 { width: 23px; } .w24 { width: 24px; } .w25 { width: 25px; } .w26 { width: 26px; } .w27 { width: 27px; }
.win { font-size: 13.500px; width: 51px; padding-left: 1px; }
.apptitle { margin-left: 872px; font-size: 14.600px; white-space: nowrap; }
.winbtns { margin-left: auto; display: flex; align-items: center; padding-right: 7px; }
.siemens { font: 700 15.500px "Liberation Sans", sans-serif; letter-spacing: .2px; margin-right: 28px; }
.wb { width: 12px; height: 12px; margin-left: 18px; }
.wb-min { margin-left: 0; }
.wb-res { margin-left: 20px; }
.bar2 { height: 34px; display: flex; align-items: flex-start; position: relative; }
.tab { font-size: 15px; height: 32px; line-height: 35px; text-align: center; flex: none; white-space: nowrap; }
.tab.on { color: #f3c468; border-bottom: 2px solid #f3c468; }
.t1 { width: 34px; margin-left: 18px; margin-right: 24px; }
.t2 { width: 74px; margin-right: 16px; }
.t3 { width: 57px; margin-right: 32px; }
.t4 { width: 34px; margin-right: 32px; }
.t5 { width: 51px; margin-right: 32px; }
.t6 { width: 63px; margin-right: 32px; }
.t7 { width: 91px; margin-right: 32px; }
.t8 { width: 138px; }
.search { margin-left: auto; width: 203px; height: 23px; margin-top: 5px; background: #fff; border: 1px solid #999; display: flex; align-items: center; justify-content: space-between; padding: 0 2px 0 4px; color: #a9a9a9; font-size: 12.300px; }
.search svg { width: 16px; height: 16px; }
.hb { width: 16px; height: 16px; margin: 9px 0 0 12px; }
.search + .hb { margin-left: 13px; }
.dimb { opacity: .28; margin-right: 5px; }

/* ribbon */
.ribbon { height: 104px; flex: none; display: flex; border-bottom: 1px solid #dcdcdc; position: relative; background: #fff; }
.grp { display: flex; flex-direction: column; }
.g-sketch { width: 226px; } .g-curve { width: 556px; } .g-edit { width: 203px; } .g-inc { width: 111px; } .g-solve { width: 405px; }
.gbody { height: 84px; display: flex; }
.pl7 { padding-left: 7px; } .pl6 { padding-left: 6px; }
.gfoot { height: 19px; display: flex; align-items: center; padding-right: 7px; }
.gfoot b { flex: 1; text-align: center; font-weight: 400; color: #0d7ba5; font-size: 13.500px; line-height: 17px; padding-right: 5px; }
.dd { width: 8px; height: 5px; display: block; flex: none; }
.dd path, .sort path { fill: #222; }
svg .ctdd { fill: #222; }
.rdiv { width: 1px; height: 95px; margin-top: 4px; background: #dfdfdf; flex: none; }
.rcol { position: absolute; right: 4px; top: 89px; }
.rb { display: flex; flex-direction: column; align-items: center; height: 80px; margin-top: 2px; padding-top: 2px; flex: none; line-height: 19px; font-size: 13px; white-space: nowrap; }
.rb .ri { margin-bottom: 6px; }
.ri { width: 32px; height: 32px; flex: none; overflow: visible; }
.ten { font: 10px "Open Sans", sans-serif; fill: #e8821e; text-anchor: middle; }
.mdd { margin-top: 6px; }
.ddin { display: inline-block; vertical-align: 2px; }
.hl { background: #cde4ec; }
.hlbox { display: flex; justify-content: center; width: 76px; height: 38px; margin: -2px 0 2px; padding-top: 2px; background: #cde4ec; }
.w40 { width: 40px; } .w42 { width: 42px; } .w45 { width: 45px; } .w46 { width: 46px; } .w48 { width: 48px; }
.w50 { width: 50px; } .w56 { width: 56px; } .w58 { width: 58px; } .w61 { width: 61px; } .w66 { width: 66px; }
.w68 { width: 68px; } .w76 { width: 76px; } .w80 { width: 80px; }
.skcol { display: flex; flex-direction: column; padding-top: 3px; }
.namerow { display: flex; align-items: center; height: 24px; }
.nm { width: 40px; }
.combo { border: 1px solid #8c8c8c; display: flex; align-items: center; justify-content: space-between; height: 24px; background: #fff; padding: 1px 5px 0 3px; white-space: nowrap; font-size: 12.800px; }
.combo span { overflow: hidden; }
.combo .dd { width: 10px; height: 6px; }
.c-name { width: 116px; }
.c-name span { width: 90px; }
.sm { display: flex; align-items: center; height: 26px; padding-left: 2px; }
.s-re { margin-top: 2px; }
.sm svg { width: 16px; height: 16px; margin-right: 2px; }
.cf { width: 89px; padding: 11px 0 0 5px; }
.cfr { display: flex; align-items: center; height: 24px; gap: 4px; }
.cfr svg { width: 24px; height: 24px; }
.cfr2 { margin-top: 13px; }
.ops { width: 80px; padding: 2px 0 0 6px; }
.sm2 { display: flex; align-items: center; height: 26px; gap: 4px; }
.sm2 svg { width: 16px; height: 20px; }

/* tools row */
.tools { height: 31px; flex: none; border-bottom: 1px solid #ababab; display: flex; align-items: center; position: relative; padding-left: 12px; padding-bottom: 1px; }
.mn { width: 12px; height: 12px; }
.menu { margin-left: 7px; width: 35px; font-size: 13.500px; }
.m1 { margin-left: 4px; }
.tdiv { width: 1px; height: 24px; background: #dfdfdf; margin-left: 9px; }
.c-f1 { width: 172px; margin-left: 12px; height: 25px; }
.ti { width: 20px; height: 20px; flex: none; }
.ti1 { margin: 0 9px 0 9px; }
.c-f2 { width: 180px; height: 25px; }
.ti2 { margin-left: 7px; }
.ti3 { margin-left: 7px; }
.ti4 { margin-left: 7px; }
.m2 { margin-left: 6px; }
.d2 { margin-left: 13px; }
.tools .rcol { top: 15px; }

/* main */
.work { flex: 1; min-height: 0; display: flex; }
.rail { width: 36px; flex: none; background: #dcdcdc; border-right: 1px solid #c2c2c2; }
.rit { display: flex; align-items: center; justify-content: center; padding-left: 4px; }
.rit svg { width: 24px; height: 24px; }
.rit .gear { width: 16px; height: 16px; }
.h35 { height: 35px; } .h46 { height: 46px; } .h48 { height: 48px; } .h50 { height: 50px; }
.act { background: #fff; margin-left: 3px; padding-left: 0; margin-right: -1px; border: 1px solid #c2c2c2; border-right: 0; position: relative; }
.rg { stroke: #555; stroke-width: 1.300; }
svg .rf { fill: #b5b5b5; stroke: #555; stroke-width: 1.100; }
.rl { stroke: #444; stroke-width: 1.100; }
.rl2 { stroke: #666; stroke-width: 1.200; }
svg .rw { fill: #eee; stroke: #555; }
svg .rw2 { fill: #fff; stroke: #444; stroke-width: 1.100; }
svg .ri-i { fill: #8a8a8a; stroke: #444; stroke-width: 1.400; }
.rarc { stroke: #b5b5b5; stroke-width: 1.200; }
svg .glob { fill: #2a85ad; }
svg .globl { fill: #9fd0e4; }
.tool { stroke: #333; stroke-width: 2.600; }
.tool2 { stroke: #333; stroke-width: 1.600; }

.nav { width: 500px; flex: none; border-right: 1px solid #c4c4c4; padding: 0 17px 13px 14px; display: flex; flex-direction: column; }
.navhead { height: 31px; flex: none; display: flex; align-items: center; position: relative; margin-left: -7px; }
.nvi { width: 17px; height: 17px; margin-right: 3px; }
.navt { font-size: 14.400px; }
.maxi { width: 12px; height: 11px; margin-left: auto; margin-right: -3px; }
.mx { stroke: #111; stroke-width: 1; }
.reset { width: 32px; height: 32px; flex: none; align-self: flex-end; margin-top: 4px; border: 1px solid #8d8d8d; display: flex; align-items: center; justify-content: center; }
.reset svg { width: 24px; height: 24px; }
.ntabs { display: flex; height: 34px; margin-top: 2px; margin-left: 2px; flex: none; align-items: flex-end; position: relative; z-index: 1; }
.nt { height: 32px; background: #f0f0f0; border: 1px solid #d3d3d3; border-bottom: 0; display: flex; align-items: center; justify-content: center; font-size: 13.900px; color: #3b3b3b; margin-right: 1px; white-space: nowrap; }
.nt1 { width: 63px; } .nt2 { width: 76px; } .nt3 { width: 143px; margin-right: 0; }
.nt4 { width: 67px; height: 34px; background: #fff; color: #0d7ba5; border-color: #c8c8c8; margin-bottom: -1px; padding-bottom: 3px; }
.box { flex: 1; min-height: 0; border: 1px solid #c8c8c8; padding: 3px 5px 6px 6px; }
.inner { height: 100%; border: 1px solid #cfcfcf; padding-top: 1px; display: flex; flex-direction: column; }
.hdr, .row { display: grid; grid-template-columns: 273px 63px 63px 54px; flex: none; }
.hdr { height: 24px; background: #f0f0f0; border-bottom: 1px solid #e0e0e0; }
.hc { padding: 1px 0 0 7px; line-height: 22px; font-size: 14px; color: #3b3b3b; border-right: 1px solid #e0e0e0; display: flex; align-items: center; }
.hc:last-child { border-right: 0; }
.sort { width: 12px; height: 6px; margin-left: 19px; }
.row { height: 24px; border-bottom: 1px solid #ebebeb; background: #fff; }
.row.alt { background: #f9f9f9; }
.c1 { border-right: 1px solid #000; display: flex; align-items: center; white-space: nowrap; position: relative; font-size: 14.200px; color: #2f2f2f; padding-top: 1px; }
.cs, .cx, .cv { display: flex; align-items: center; padding-left: 5px; border-right: 1px solid #f0f0f0; }
.cv { border-right: 0; }
.lv0 { padding-left: 5px; } .lv1 { padding-left: 25px; } .lv2 { padding-left: 44px; }
.exp { width: 10px; height: 10px; border: 1px solid #d5d5d5; position: relative; flex: none; margin-top: -1px; }
.exp::before { content: ""; position: absolute; left: 1px; right: 1px; top: 3px; height: 1px; background: #333; }
.exp.pl::after { content: ""; position: absolute; top: 1px; bottom: 1px; left: 3px; width: 1px; background: #333; }
.ch .c1::before { content: ""; position: absolute; left: 48px; top: 0; bottom: 0; border-left: 1px dotted #aaa; }
.ch.last .c1::before { bottom: 50%; }
.ch .exp { z-index: 1; background: #fff; }
.eye { width: 16px; height: 12px; margin-left: 5px; margin-top: -1px; }
.eyeo { stroke: #555; stroke-width: 1; }
svg .eyep { fill: #555; }
.rootk { width: 16px; height: 16px; margin-left: 1px; margin-right: 2px; margin-top: -1px; }
.dash { stroke: #444; stroke-width: .8; stroke-dasharray: 2 1.500; }
.fold { width: 16px; height: 13px; margin-left: 4px; margin-right: 4px; margin-top: -1px; }
.ik { width: 17px; height: 17px; margin-left: 4px; margin-right: 2px; flex: none; margin-top: -1px; }
.cx .ik { margin-left: 0; }
.st { width: 14px; height: 14px; }
.filler { flex: 1; min-height: 0; background:
    linear-gradient(90deg, transparent 272px, #000 272px, #000 273px, transparent 273px) 0 0 no-repeat,
    linear-gradient(90deg, transparent 335px, #f0f0f0 335px, #f0f0f0 336px, transparent 336px, transparent 398px, #f0f0f0 398px, #f0f0f0 399px, transparent 399px) 0 0 no-repeat,
    repeating-linear-gradient(180deg, #fff 0, #fff 23px, #ebebeb 23px, #ebebeb 24px, #f9f9f9 24px, #f9f9f9 47px, #ebebeb 47px, #ebebeb 48px); }
.hscroll { height: 21px; flex: none; background: #f0f0f0; padding: 8px 0 0 22px; }
.hscroll i { width: 314px; height: 4px; background: #808080; border-radius: 2px; }

.doc { flex: 1; min-width: 0; display: flex; flex-direction: column; border-bottom: 1px solid #bdbdbd; }
.doctabs { height: 30px; flex: none; border-bottom: 2px solid #03668d; display: flex; align-items: stretch; }
.dt { display: flex; align-items: center; white-space: nowrap; font-size: 14px; }
.dt svg { width: 14px; height: 14px; margin-right: 5px; flex: none; }
.dt1 { width: 158px; padding-left: 6px; color: #333; }
.dt2 { width: 213px; padding-left: 9px; background: #03668d; color: #fff; }
.dt .dtx { width: 11px; height: 11px; margin: 0 0 0 6px; }
.canvas { flex: 1; min-height: 0; position: relative; }
.sketch { display: block; width: 100%; height: 100%; }

svg .shape { fill: #e0edf1; }
.d-green { stroke: #d0e3cc; stroke-width: 1.500; stroke-dasharray: 2 2; }
.d-blue { stroke: #5fb0f0; stroke-width: 1.300; stroke-dasharray: 2 2; }
.d-red { stroke: #f6a3a8; stroke-width: 1.500; stroke-dasharray: 2 2; }
.ext path { stroke: #888; stroke-width: 1; }
.ext2 path { stroke: #999; stroke-width: 2; }
.dimg { stroke: #8a8a8a; stroke-width: 2; }
.dimk path { stroke: #333; stroke-width: 1.400; }
.thin path { stroke: #444; stroke-width: .8; }
.arrow polygon { fill: #333; }
.dt-t { font: 47px "Liberation Sans", Arial, sans-serif; fill: #333; text-anchor: middle; }
.under { stroke: #b8b8b8; stroke-width: 1.500; }
.outline { stroke: #a86500; stroke-width: 1.800; }
.thick { stroke: #a86500; stroke-width: 3.500; }
.axis { stroke: #000; stroke-width: 2.500; }
.axisg { stroke: #6a6a6a; stroke-width: 2; }
.origin { stroke: #1414d8; stroke-width: 3; }
.pts ellipse { fill: #a86500; }
.lead path { stroke: #6a6a6a; stroke-width: 1.800; }
.call rect { fill: #fff; stroke: #6e6e6e; stroke-width: 2; }
.ygreen { stroke: #2b8c30; stroke-width: 8; }
.yhead { fill: #2b8c30; }
svg .tbox { fill: #fff; stroke: #bdbdbd; stroke-width: 1.500; }
.oct { fill: #0c3fe0; }
.octd { fill: #0a2aa0; }
svg .xsh1 { fill: #e04040; }
svg .xsh2 { fill: #c23030; }
svg .xsh3 { fill: #8f2222; }
.xh1 { fill: #e23b3b; }
.xh2 { fill: #9a2626; }
.tl-y { font: 24px "Liberation Sans", sans-serif; fill: #2b8c30; text-anchor: middle; }
.tl-x { font: 24px "Liberation Sans", sans-serif; fill: #d33; text-anchor: middle; }

.ctool { position: absolute; left: 810px; top: 7px; width: 366px; height: 32px; border-bottom: 2px solid #e2e2e2; }
.ctool svg { display: block; width: 366px; height: 31px; }
.dso { stroke: #e8821e; stroke-width: 1.200; stroke-dasharray: 3 2; }
.ctdiv { stroke: #dcdcdc; stroke-width: 1.500; }

.rtool { width: 34px; flex: none; display: flex; flex-direction: column; align-items: center; padding-top: 12px; gap: 7px; border-left: 1px solid #ddd; border-bottom: 1px solid #bdbdbd; }
.rtool svg { width: 25px; height: 25px; flex: none; }
.rtdiv { width: 28px; height: 1px; background: #ddd; margin-top: 3px; }

.status { height: 19px; flex: none; display: flex; align-items: center; font: 700 13.400px "Open Sans", sans-serif; color: #222; padding-left: 3px; white-space: nowrap; }
.s1 { width: 1251px; }
```
